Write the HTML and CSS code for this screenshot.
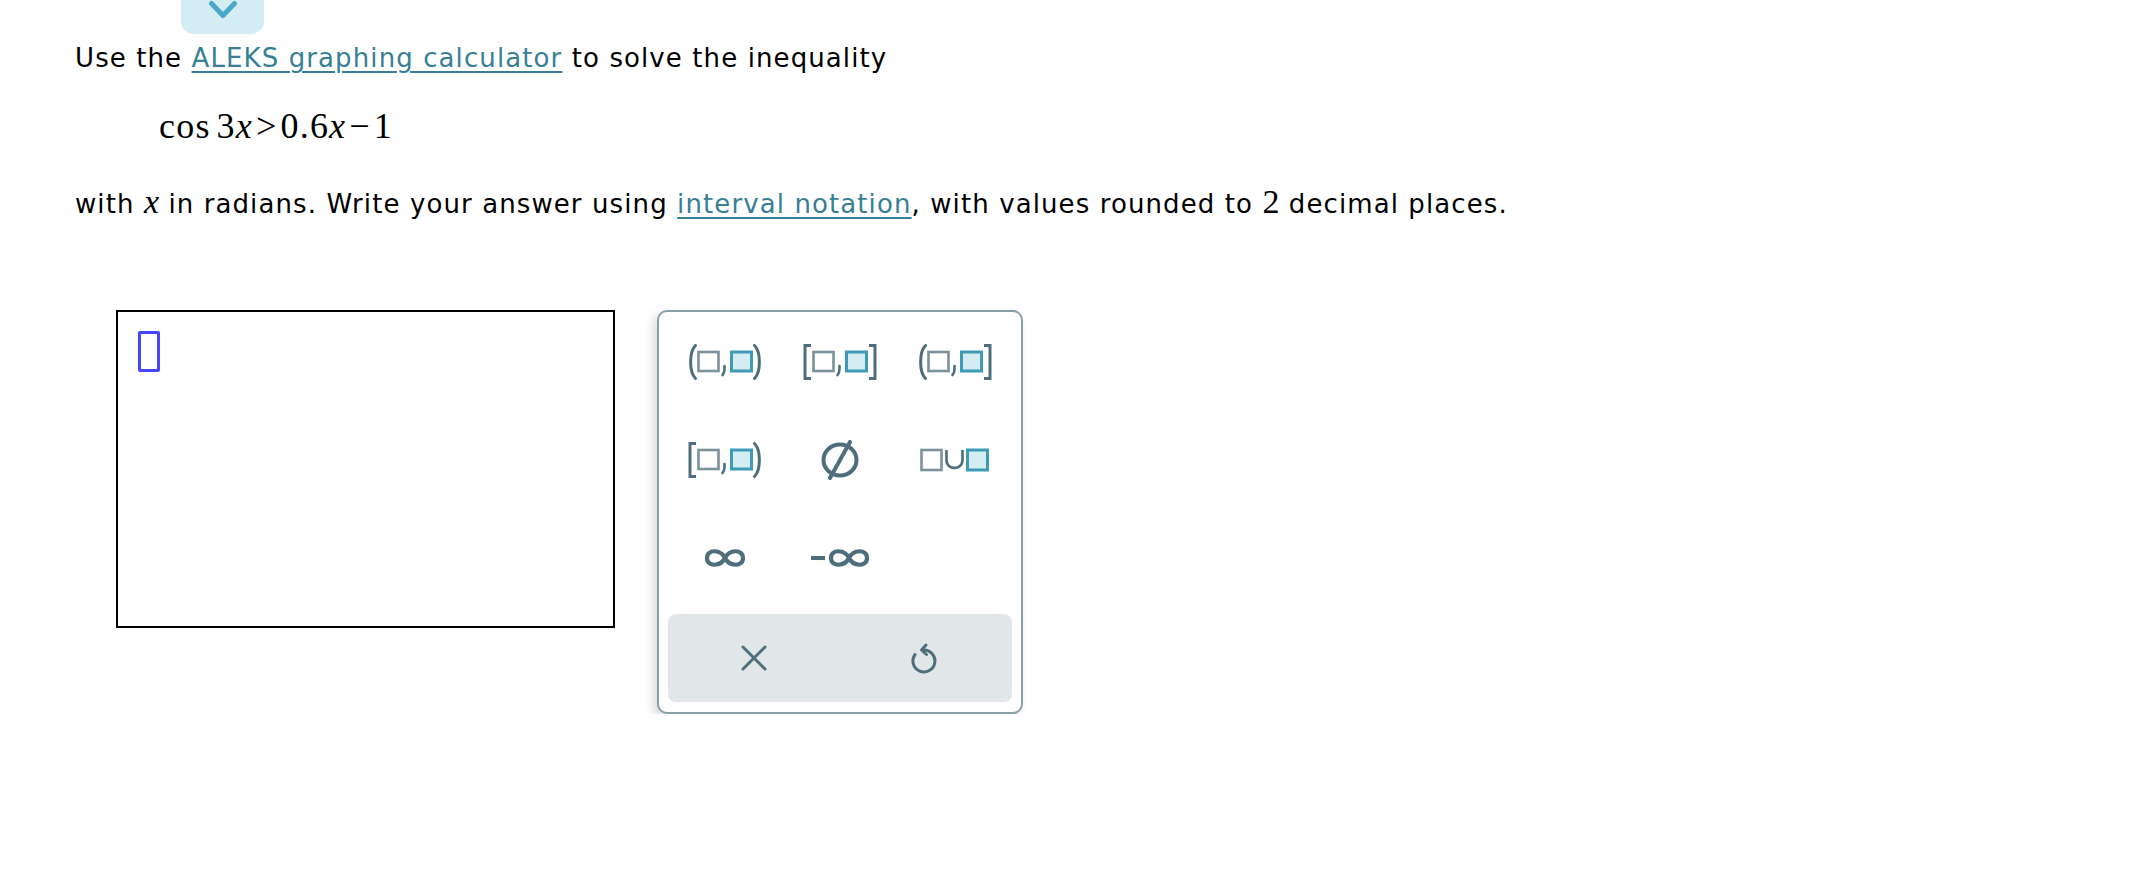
FILE: index.html
```html
<!DOCTYPE html>
<html lang="en">
<head>
<meta charset="utf-8">
<title>ALEKS question</title>
<link rel="stylesheet" href="styles.css">
</head>
<body>
<div class="page">
  <div class="tab">
    <svg class="chev" width="30" height="22" viewBox="0 0 30 22"><polyline points="3.5,3.5 15,15.5 26.5,3.5" fill="none" stroke="#4aa9c9" stroke-width="5" stroke-linecap="round" stroke-linejoin="round"/></svg>
  </div>

  <p class="prompt l1">Use the <a class="lnk" href="#">ALEKS graphing calculator</a> to solve the inequality</p>

  <div class="math"><span class="fn">cos</span><span>3</span><i>x</i><span class="op">&gt;</span><span>0.6</span><i>x</i><span class="op">−</span><span>1</span></div>

  <p class="prompt l3">with <i class="mx">x</i> in radians. Write your answer using <a class="lnk" href="#">interval notation</a>, with values rounded to <span class="mn">2</span> decimal places.</p>

  <div class="work">
    <div class="answer"><span class="cursor"></span></div>

    <div class="keypad">
      <div class="keys">
        <button class="key" type="button" aria-label="open interval">
          <svg width="78" height="36" viewBox="0 0 78 36">
            <path class="dk" d="M9.5 1.5 C3 8 3 28 9.5 34.5"/>
            <rect class="bx1" x="12.5" y="8" width="20" height="19"/>
            <path class="cm" d="M38.5 22 v3 q0 4 -2 6"/>
            <rect class="bx2" x="45.5" y="8" width="20" height="19"/>
            <path class="dk" d="M68.5 1.5 C75 8 75 28 68.5 34.5"/>
          </svg>
        </button>
        <button class="key" type="button" aria-label="closed interval">
          <svg width="78" height="36" viewBox="0 0 78 36">
            <path class="br" d="M10 1.5 H4 V34.5 H10"/>
            <rect class="bx1" x="12.5" y="8" width="20" height="19"/>
            <path class="cm" d="M38.5 22 v3 q0 4 -2 6"/>
            <rect class="bx2" x="45.5" y="8" width="20" height="19"/>
            <path class="br" d="M68 1.5 H74 V34.5 H68"/>
          </svg>
        </button>
        <button class="key" type="button" aria-label="left open interval">
          <svg width="78" height="36" viewBox="0 0 78 36">
            <path class="dk" d="M9.5 1.5 C3 8 3 28 9.5 34.5"/>
            <rect class="bx1" x="12.5" y="8" width="20" height="19"/>
            <path class="cm" d="M38.5 22 v3 q0 4 -2 6"/>
            <rect class="bx2" x="45.5" y="8" width="20" height="19"/>
            <path class="br" d="M68 1.5 H74 V34.5 H68"/>
          </svg>
        </button>
        <button class="key" type="button" aria-label="right open interval">
          <svg width="78" height="36" viewBox="0 0 78 36">
            <path class="br" d="M10 1.5 H4 V34.5 H10"/>
            <rect class="bx1" x="12.5" y="8" width="20" height="19"/>
            <path class="cm" d="M38.5 22 v3 q0 4 -2 6"/>
            <rect class="bx2" x="45.5" y="8" width="20" height="19"/>
            <path class="dk" d="M68.5 1.5 C75 8 75 28 68.5 34.5"/>
          </svg>
        </button>
        <button class="key" type="button" aria-label="empty set">
          <svg width="40" height="40" viewBox="0 0 40 40">
            <ellipse class="dk thick" cx="20" cy="20" rx="16.5" ry="15.5"/>
            <path class="dk thick" d="M30 2 L10 38"/>
          </svg>
        </button>
        <button class="key" type="button" aria-label="union">
          <svg width="70" height="24" viewBox="0 0 70 24">
            <rect class="bx1" x="1.5" y="2" width="20" height="20"/>
            <path class="un" d="M26.5 2 V12 C26.5 22.5 42.5 22.5 42.5 12 V2"/>
            <rect class="bx2" x="47.5" y="2" width="20" height="20"/>
          </svg>
        </button>
        <button class="key" type="button" aria-label="infinity">
          <svg width="42" height="26" viewBox="0 0 42 26">
            <path class="dk inf" d="M21 13 C17 4.5 3 3.5 3 13 C3 22.5 17 21.5 21 13 C25 4.5 39 3.5 39 13 C39 22.5 25 21.5 21 13 Z"/>
          </svg>
        </button>
        <button class="key" type="button" aria-label="negative infinity">
          <svg width="60" height="26" viewBox="0 0 60 26">
            <rect class="fl" x="1" y="11" width="14" height="4"/>
            <path class="dk inf" d="M39 13 C35 4.5 21 3.5 21 13 C21 22.5 35 21.5 39 13 C43 4.5 57 3.5 57 13 C57 22.5 43 21.5 39 13 Z"/>
          </svg>
        </button>
      </div>
      <div class="actions">
        <button class="act" type="button" aria-label="clear">
          <svg width="26" height="26" viewBox="0 0 26 26">
            <path class="dk" d="M2 2 L24 24 M24 2 L2 24"/>
          </svg>
        </button>
        <button class="act" type="button" aria-label="undo">
          <svg width="30" height="34" viewBox="0 0 30 34">
            <path class="dk" d="M12 9 A11 11 0 1 1 4 13.5"/>
            <path class="dk" d="M15 4 L10.5 9 L15.5 13.5"/>
          </svg>
        </button>
      </div>
    </div>
  </div>
</div>
</body>
</html>
```

FILE: styles.css
```css
html, body {
  margin: 0;
  padding: 0;
  background: #ffffff;
}

body {
  font-family: "DejaVu Sans", Verdana, sans-serif;
  color: #000000;
}

.page {
  padding-left: 75px;
}

.tab {
  margin-left: 106px;
  width: 83px;
  height: 34px;
  background: #d4edf4;
  border-radius: 0 0 13px 13px;
  display: flex;
  justify-content: center;
}

.chev {
  display: block;
}

.prompt {
  margin: 0;
  font-size: 26px;
  line-height: 36px;
  letter-spacing: 1.1px;
  white-space: nowrap;
}

.l1 {
  margin-top: 6px;
}

.l3 {
  margin-top: 39px;
}

.lnk {
  color: #387f95;
  text-decoration: underline;
  text-decoration-thickness: 2px;
  text-underline-offset: 4px;
}

.mx {
  font-family: "Liberation Serif", "Times New Roman", serif;
  font-style: italic;
  font-size: 34px;
  line-height: 1;
  letter-spacing: 0;
}

.mn {
  font-family: "Liberation Serif", "Times New Roman", serif;
  font-size: 34px;
  line-height: 1;
  letter-spacing: 0;
}

.math {
  margin: 30px 0 0 84px;
  font-family: "Liberation Serif", "Times New Roman", serif;
  font-size: 36px;
  line-height: 40px;
  letter-spacing: 1.2px;
  white-space: nowrap;
}

.math i {
  font-style: italic;
}

.math .fn {
  margin-right: 6px;
}

.math .op {
  margin: 0 3px;
}

.work {
  display: flex;
  align-items: flex-start;
  gap: 42px;
  margin: 88px 0 0 41px;
}

.answer {
  box-sizing: border-box;
  width: 499px;
  height: 318px;
  border: 2px solid #000000;
  padding: 19px 0 0 20px;
}

.cursor {
  display: block;
  box-sizing: border-box;
  width: 22px;
  height: 41px;
  border: 3px solid #4646ff;
  border-radius: 2px;
}

.keypad {
  box-sizing: border-box;
  width: 366px;
  border: 2px solid #8a9fa7;
  border-radius: 10px;
  padding: 15px 9px 10px;
  background: #ffffff;
  box-shadow: -4px 4px 10px rgba(40, 60, 70, 0.18);
}

.keys {
  display: grid;
  grid-template-columns: repeat(3, 1fr);
  grid-auto-rows: 70px;
  row-gap: 28px;
}

.key,
.act {
  display: flex;
  align-items: center;
  justify-content: center;
  background: none;
  border: 0;
  padding: 0;
  margin: 0;
  cursor: pointer;
}

.key svg,
.act svg {
  display: block;
}

.actions {
  margin-top: 21px;
  height: 88px;
  background: #e1e6e9;
  border-radius: 8px;
  display: grid;
  grid-template-columns: 1fr 1fr;
}

.dk {
  fill: none;
  stroke: #4d6e7a;
  stroke-width: 3;
  stroke-linecap: round;
  stroke-linejoin: round;
}

.thick {
  stroke-width: 4;
}

.inf {
  stroke-width: 4.2;
}

.br {
  fill: none;
  stroke: #4d6e7a;
  stroke-width: 3;
  stroke-linecap: butt;
  stroke-linejoin: miter;
}

.cm {
  fill: none;
  stroke: #4d6e7a;
  stroke-width: 2.6;
  stroke-linecap: round;
}

.un {
  fill: none;
  stroke: #4d6e7a;
  stroke-width: 2.6;
}

.fl {
  fill: #4d6e7a;
}

.bx1 {
  fill: #ffffff;
  stroke: #7a929b;
  stroke-width: 2.6;
}

.bx2 {
  fill: #d4edf3;
  stroke: #3e9bb7;
  stroke-width: 3;
}
```
